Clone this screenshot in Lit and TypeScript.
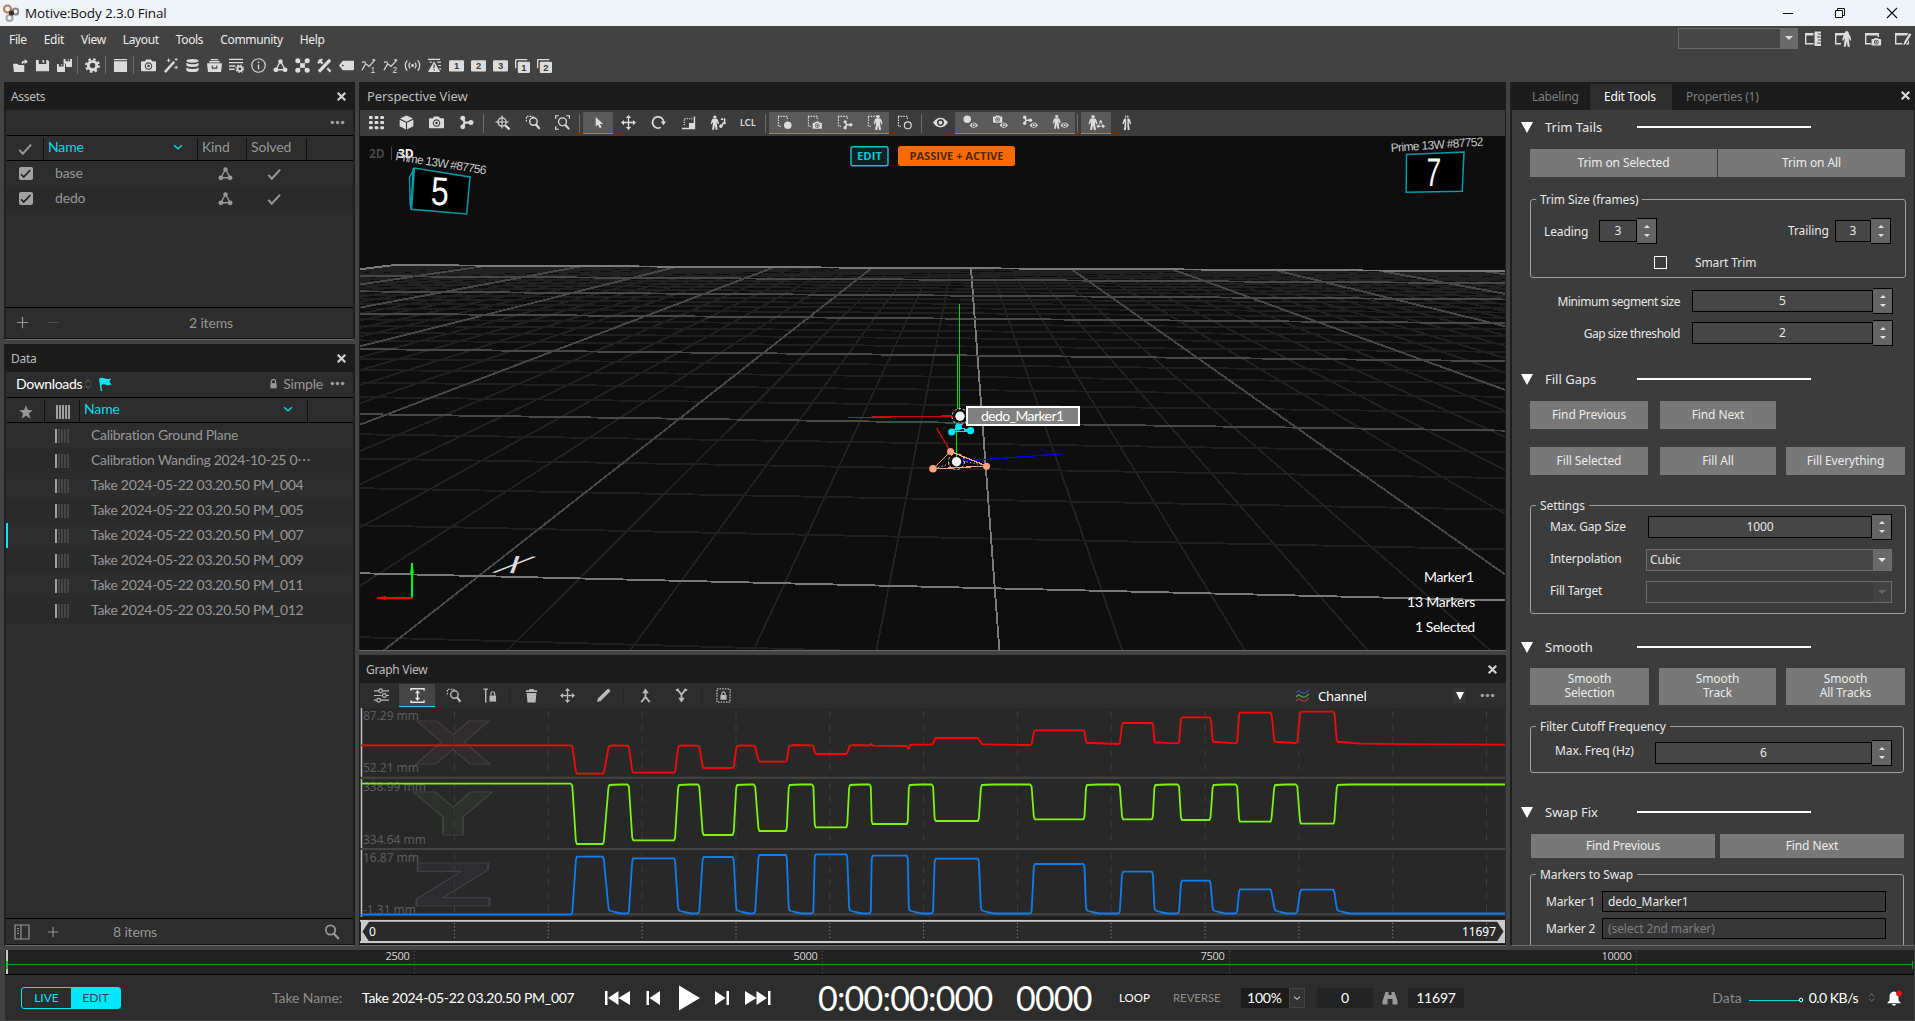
import { LitElement, html, svg, css, nothing } from "lit";
import { customElement } from "lit/decorators.js";

/* ---------- icon set: 16x16 artwork, painted with currentColor ---------- */
const person = (x: number, y: number, s: number) => svg`<g transform="translate(${x} ${y}) scale(${s * 1.08} ${s})"><circle cx="4" cy="1.7" r="1.7" fill="currentColor"/><path d="M2 3.700h4q.8 0 1.100 1L8.400 9.500l-1.200.4L6 7v2.400L6.900 16H4.900L4 10.800 3.100 16H1.100L2 9.400V7L.8 9.900l-1.200-.4L.9 4.700q.3-1 1.100-1z" fill="currentColor"/></g>`;
const triad = (x: number, y: number, s: number) => svg`<g transform="translate(${x} ${y}) scale(${s})"><path d="M8 3.5 3 12.5h10z" fill="none" stroke="currentColor" stroke-width="1.5"/><circle cx="8" cy="3.6" r="2.4" fill="currentColor"/><circle cx="3.1" cy="12.6" r="2.6" fill="currentColor"/><circle cx="12.9" cy="12.6" r="2.6" fill="currentColor"/></g>`;
const nodes = (x: number, y: number, s: number) => svg`<g transform="translate(${x} ${y}) scale(${s})"><path d="M4 3.5 6 8l-2 4.5M6 8h7" fill="none" stroke="currentColor" stroke-width="2.4"/><circle cx="4" cy="3.4" r="2.6" fill="currentColor"/><circle cx="4" cy="12.6" r="2.6" fill="currentColor"/><circle cx="12.7" cy="8" r="2.7" fill="currentColor"/></g>`;
const cam = (x: number, y: number, s: number) => svg`<g transform="translate(${x} ${y}) scale(${s})"><path fill-rule="evenodd" d="M5.3 1.5h5.4l1 2H15q1 0 1 1V13q0 1-1 1H1q-1 0-1-1V4.500q0-1 1-1h3.300zM8 4.600a4 4 0 1 0 .01 0z" fill="currentColor"/><circle cx="8" cy="8.600" r="2.100" fill="none" stroke="currentColor" stroke-width="1.500"/></g>`;
const eye = (x: number, y: number, s: number) => svg`<g transform="translate(${x} ${y}) scale(${s})"><path fill-rule="evenodd" d="M0 8Q3.500 2.800 8 2.800T16 8Q12.500 13.200 8 13.200T0 8zM8 4.200a3.800 3.800 0 1 0 .01 0z" fill="currentColor"/><circle cx="8" cy="8" r="2" fill="currentColor"/></g>`;
const dashBox = svg`<path d="M1 1.500h10v3M1.500 2v10h4" fill="none" stroke="currentColor" stroke-width="1.200" stroke-dasharray="1.600 1.200"/>`;
const windowBox = svg`<path d="M.7 2.700h12.600v10H.7z" fill="none" stroke="currentColor" stroke-width="1.400"/><path d="M0 2h14v2.500H0z" fill="currentColor"/>`;
const magnifier = svg`<circle cx="9" cy="7" r="4" fill="none" stroke="currentColor" stroke-width="1.500"/><path d="m11.800 10 3.700 4.800" stroke="currentColor" stroke-width="2.400"/>`;
const numTile = (n: string, stacked: boolean) => svg`${stacked ? svg`<path d="M.7 11V2.700q0-1 1-1H13" fill="none" stroke="currentColor" stroke-width="1.400"/>` : nothing}<rect x=${stacked ? 3 : 0} y=${stacked ? 4 : 2.500} width=${stacked ? 13 : 16} height="12" rx="1.200" fill="currentColor"/><text x=${stacked ? 9.500 : 8} y=${stacked ? 13.400 : 12.200} text-anchor="middle" font-size="10" font-weight="700" font-family="Liberation Sans, sans-serif" fill="#3a3a3a">${n}</text>`;
const plot = (n: string) => svg`<path d="M1 13 5 6l3.500 3L15 2M5 4.500 1 4.500M12 2h3" fill="none" stroke="currentColor" stroke-width="1.300"/><text x="10" y="15.500" font-size="9" font-family="Liberation Sans, sans-serif" fill="currentColor">${n}</text>`;

const ICONS: Record<string, unknown> = {
  open: svg`<path d="M0 6h5l1 1.500h6V15H1zM9 5.500Q9 3 12.500 3V1L16 4l-3.500 2.500V4.800q-2 0-2 1.700z" fill="currentColor"/>`,
  save: svg`<path fill-rule="evenodd" d="M1 2h12.500L15 3.500V14H1zM4 2v4.500h8V2H9.800v3H8V2z" fill="currentColor"/>`,
  saveAll: svg`<path fill-rule="evenodd" d="M7 1h9v8.500H9.500V6H7zM9 1v2.500h5V1h-1.500v1.500h-1V1zM0 6.500h8.500V15H0zM2 6.500V9h5V6.500H5.500V8h-1V6.500z" fill="currentColor"/>`,
  gear: svg`<circle cx="8" cy="8" r="4.500" fill="none" stroke="currentColor" stroke-width="3"/><circle cx="8" cy="8" r="6.800" fill="none" stroke="currentColor" stroke-width="2.200" stroke-dasharray="2.670 2.670"/>`,
  square: svg`<path d="M1 1h14v1.500H1zM1 3.500h14V15H1z" fill="currentColor"/>`,
  camera: cam(0, 0, 1),
  wand: svg`<path d="m2 15 10-11" stroke="currentColor" stroke-width="2.600"/><path d="M6 .5v4M4 2.500h4M14 8v4M12 10h4M12.500 1.500h3M14 0v3" stroke="currentColor"/>`,
  db: svg`<path d="M1.500 3q0-2 6.500-2t6.500 2-6.500 2-6.500-2zM1.500 5q2 1.700 6.500 1.700T14.500 5v2.500q0 2-6.500 2t-6.500-2zM1.500 10q2 1.700 6.500 1.700t6.500-1.700v2.700q0 2.300-6.500 2.300t-6.500-2.300z" fill="currentColor"/>`,
  drawer: svg`<path fill-rule="evenodd" d="M4 1h8v1.500H4zM2.500 3.200h11v1.500h-11zM0 5.500h16L15 15H1zM5 8v3.500h6V8H9.800v2H6.200V8z" fill="currentColor"/>`,
  listGear: svg`<path d="M0 1.500h15M0 5h15M0 8.500h7M0 12h6" stroke="currentColor" stroke-width="1.400"/><circle cx="11.500" cy="11.500" r="2.500" fill="none" stroke="currentColor" stroke-width="1.800"/><circle cx="11.500" cy="11.500" r="4" fill="none" stroke="currentColor" stroke-width="1.200" stroke-dasharray="1.570 1.570"/>`,
  info: svg`<circle cx="8" cy="8" r="7.200" fill="none" stroke="currentColor" stroke-width="1.200"/><path d="M8 7v5" stroke="currentColor" stroke-width="1.400"/><circle cx="8" cy="4.600" r=".9" fill="currentColor"/>`,
  triad: triad(0, 0, 1),
  five: svg`<path d="m3 3 10 10M13 3 3 13" stroke="currentColor" stroke-width="1"/>${[[3, 3], [13, 3], [8, 8], [3, 13], [13, 13]].map(([x, y]) => svg`<circle cx=${x} cy=${y} r="2.700" fill="currentColor"/>`)}`,
  tools: svg`<path d="M2 14.500 14 2" stroke="currentColor" stroke-width="3.400"/><path d="m2 2 4 4M11 11l3.500 3.500M1 5.500 5.500 1" stroke="currentColor" stroke-width="2.400"/>`,
  tag: svg`<path fill-rule="evenodd" d="M0 8 4 3h11q1 0 1 1v8q0 1-1 1H4zM4 7.200a.9.9 0 1 0 .01 0z" fill="currentColor"/>`,
  plot1: plot("1"),
  plot2: plot("2"),
  signal: svg`<circle cx="8" cy="8" r="1.500" fill="currentColor"/><path d="M5.500 5a4.500 4.500 0 0 0 0 6M10.500 5a4.500 4.500 0 0 1 0 6M2.500 2.500a8 8 0 0 0 0 11M13.500 2.500a8 8 0 0 1 0 11" fill="none" stroke="currentColor" stroke-width="1.300"/>`,
  warn: svg`<path d="M1 1.500h13M3 4.500h2M11 4.500h4M12 8h3M13 11.500h2" stroke="currentColor" stroke-width="1.300"/><path fill-rule="evenodd" d="M7.500 3.500 14 15H1zM6.900 7h1.300v4H6.900zM6.900 12h1.300v1.300H6.900z" fill="currentColor"/>`,
  t1: numTile("1", false), t2: numTile("2", false), t3: numTile("3", false),
  s1: numTile("1", true), s2: numTile("2", true),
  grid: svg`${[1, 6.500, 12].map((y) => [0, 6, 12].map((x) => svg`<rect x=${x} y=${y} width="4" height="3.200" rx="1" fill="currentColor"/>`))}`,
  cube: svg`<path d="m8 .5 7 3.300L8 7.300 1 3.800zM.7 5l6.700 3.300V15.500L.7 12zM15.300 5 8.600 8.300V15.500L15.300 12z" fill="currentColor"/>`,
  nodes: nodes(0, 0, 1),
  zoomTarget: svg`<circle cx="7.500" cy="7.500" r="4.400" fill="none" stroke="currentColor" stroke-width="1.300"/><path d="M7.500 .5v14M.5 7.500h14" stroke="currentColor" stroke-width="1.100"/><path d="m11 11 4.500 4.300" stroke="currentColor" stroke-width="2.400"/>`,
  zoomBox: svg`<path d="M1.500 7V1.500H9" fill="none" stroke="currentColor" stroke-width="1.300" stroke-dasharray="1.800 1.200"/>${magnifier}`,
  zoomFit: svg`<path d="M.7 4V.8H4M12 .8h3.300V4M.7 12v3.200H4" fill="none" stroke="currentColor" stroke-width="1.300"/><circle cx="8" cy="7.300" r="4.200" fill="none" stroke="currentColor" stroke-width="1.400"/><path d="m11 10.500 4 4.500" stroke="currentColor" stroke-width="2.200"/>`,
  pointer: svg`<path d="M5 2v10.500l2.500-2.300L9.300 14l2-.9-1.800-3.600H13z" fill="currentColor"/>`,
  move: svg`<path d="M8 2v12M2 8h12" stroke="currentColor" stroke-width="1.400"/><path d="m8 0 2.800 3.200H5.200zM8 16l2.800-3.200H5.200zM0 8l3.200-2.800v5.600zM16 8l-3.200-2.800v5.600z" fill="currentColor"/>`,
  rotate: svg`<path d="M10.500 13.200A6 6 0 1 1 13.600 7.500" fill="none" stroke="currentColor" stroke-width="1.800"/><path d="M10.500 7H16l-2.700 4z" fill="currentColor"/>`,
  scale: svg`<path d="M1 14.300h13.300V1.500" fill="none" stroke="currentColor" stroke-width="1.600"/><rect x="8.500" y="8.500" width="6" height="6" fill="currentColor"/><path d="M3.500 11V4H12" fill="none" stroke="currentColor" stroke-width="1.200" stroke-dasharray="1.400 1"/>`,
  skel: svg`${person(0, 0.500, 0.950)}<path d="M10 11q2.500.5 3-3M10.500 4.500h2.500M14.500 3.500v4" fill="none" stroke="currentColor" stroke-width="1.700"/><circle cx="10.500" cy="12" r="1.800" fill="currentColor"/><circle cx="14.500" cy="8.500" r="1.300" fill="currentColor"/>`,
  selMarker: svg`${dashBox}<circle cx="11.500" cy="11" r="4" fill="currentColor"/>`,
  selCam: svg`${dashBox}${cam(6, 6, 0.620)}`,
  selNodes: svg`${dashBox}${nodes(6, 5, 0.680)}`,
  selPerson: svg`${dashBox}${person(7.500, 0, 1)}`,
  selEmpty: svg`${dashBox}<circle cx="11.500" cy="11" r="3.700" fill="none" stroke="currentColor" stroke-width="1.200"/>`,
  eye: eye(0, 0, 1),
  eyeMarker: svg`<circle cx="4.500" cy="4.500" r="4" fill="currentColor"/>${eye(7, 6.500, 0.560)}`,
  eyeCam: svg`${cam(0, -0.500, 0.620)}${eye(7, 6.500, 0.560)}`,
  eyeNodes: svg`${nodes(-1, 0, 0.700)}${eye(7, 6.500, 0.560)}`,
  eyePerson: svg`${person(0, 0, 0.920)}${eye(8, 6.500, 0.560)}`,
  personTri: svg`${person(0, 0, 1)}${triad(8, 5, 0.560)}`,
  personHalf: svg`${person(4, 0, 1)}<path d="M8.300 0v16" stroke="#3c3c3c" stroke-width="1.200"/>`,
  sliders: svg`<path d="M0 3h5M9 3h7M0 8h8M13 8h3M0 13h3M7 13h9" stroke="currentColor" stroke-width="1.300"/><g fill="none" stroke="currentColor" stroke-width="1.300"><circle cx="7" cy="3" r="2"/><circle cx="11" cy="8" r="2"/><circle cx="5" cy="13" r="2"/></g>`,
  fitY: svg`<path d="M1 3V.800h14V3M1 13v2.200h14V13" fill="none" stroke="currentColor" stroke-width="1.400"/><path d="M8 4v8" stroke="currentColor" stroke-width="1.500"/><path d="m8 2.200 2.800 3.300H5.200zM8 13.800l2.800-3.300H5.200z" fill="currentColor"/>`,
  tLock: svg`<path d="M1.500 1.200h5M4 1v14.500" stroke="currentColor" stroke-width="1.500"/><path d="M8 8h7v6.500H8z" fill="currentColor"/><path d="M9.500 8V6q0-2 2-2t2 2v2" fill="none" stroke="currentColor" stroke-width="1.300"/>`,
  trash: svg`<path d="M2 2.500h3.500V1h5v1.500H14v1.700H2zM2.800 5.300h10.400L12.300 15.500H3.700z" fill="currentColor"/>`,
  pencil: svg`<path d="m1 15 1.200-4L12 1.200q1-.7 2 .2l.8.900q.7.900 0 1.700L5 13.800z" fill="currentColor"/>`,
  merge: svg`<path d="M8 4v5.500L3.500 15M8 9.500l4.500 5.500" fill="none" stroke="currentColor" stroke-width="1.900"/><path d="m8 .5 3.500 5h-7z" fill="currentColor"/>`,
  split: svg`<path d="M8 12V7L3.500 1.500M8 7l4.500-5.500M2 2.500 5 1M11 1l3 1.500" fill="none" stroke="currentColor" stroke-width="1.900"/><path d="m8 15.500 3.500-5h-7z" fill="currentColor"/>`,
  lockBox: svg`<path d="M1 1h14v14H1z" fill="none" stroke="currentColor" stroke-width="1.400" stroke-dasharray="1.600 1.200"/><path d="M4.700 7.500h6.600v5H4.700z" fill="currentColor"/><path d="M6.200 7.500V6q0-1.900 1.800-1.900T9.800 6v1.500" fill="none" stroke="currentColor" stroke-width="1.300"/>`,
  channel: svg`<g fill="none" stroke-width="1.400"><path d="M0 4.500 3.500 2 8 5 12 4.500 16 1" stroke="#4050c0"/><path d="M0 9.500 3.500 7 8 10 12 9.500 16 6" stroke="#59b146"/><path d="M0 14.500 3.500 12 8 15 12 14.500 16 11" stroke="#b03a3a"/></g>`,
  check: svg`<path d="m1.500 9 4 4.300L15 3" fill="none" stroke="currentColor" stroke-width="2.400"/>`,
  star: svg`<path d="m8 .2 2.200 5.400 5.600.3-4.400 3.600 1.600 5.900L8 12.200 3 15.400l1.600-5.900L.2 5.900l5.600-.3z" fill="currentColor"/>`,
  flag: svg`<path d="M2 2.500 4 16" stroke="currentColor" stroke-width="1.700"/><path d="M1.500 1.800q3-2 6-.300t7.500-.200L13 5.500l2.500 3q-4 1.700-6.500.3t-6 .9z" fill="currentColor"/>`,
  lock: svg`<path d="M3.500 7.500h9V15h-9z" fill="currentColor"/><path d="M5 7.500V5q0-3 3-3t3 3v2.500" fill="none" stroke="currentColor" stroke-width="1.600"/>`,
  search: svg`<circle cx="6.500" cy="6" r="4.700" fill="none" stroke="currentColor" stroke-width="1.800"/><path d="m9.800 9.500 5 5.500" stroke="currentColor" stroke-width="2.500"/>`,
  sidebar: svg`<path d="M1 1h14v14H1zM7 1v14" fill="none" stroke="currentColor" stroke-width="1.200"/><path d="M3 4.500h2M3 7h2M3 9.500h2" stroke="currentColor"/>`,
  plus: svg`<path d="M8 2v12M2 8h12" stroke="currentColor" stroke-width="1.200"/>`,
  minus: svg`<path d="M2 8h12" stroke="currentColor" stroke-width="1.200"/>`,
  close: svg`<path d="m4 4 8 8M12 4l-8 8" stroke="currentColor" stroke-width="2.300"/>`,
  dots: svg`<circle cx="2.500" cy="8" r="1.900" fill="currentColor"/><circle cx="8" cy="8" r="1.900" fill="currentColor"/><circle cx="13.500" cy="8" r="1.900" fill="currentColor"/>`,
  chev: svg`<path d="m4 6.200 4 3.600 4-3.600" fill="none" stroke="currentColor" stroke-width="1.300"/>`,
  updown: svg`<path d="m4.500 6.300 3.500-4 3.500 4M4.500 9.700l3.500 4 3.500-4" fill="none" stroke="currentColor" stroke-width="1.300"/>`,
  winRuler: svg`${windowBox}<path d="M8.500 0H16v16H8.500z" fill="#424242"/><path d="M9.500.5H16v2h-3v1h3v2h-4v1h4v2h-3v1h3v2h-4v1h4V15H9.500z" fill="currentColor"/>`,
  winPerson: svg`${windowBox}<path d="M6 4.500h10V16H6z" fill="#424242"/>${person(7.500, 0, 0.980)}`,
  winCam: svg`${windowBox}<path d="M6 6h10v9H6z" fill="#424242"/>${cam(6.500, 6, 0.600)}`,
  winPen: svg`${windowBox}<path d="m7 15 .8-4L14 1l2 1v4l-6 9z" fill="#424242"/><path d="m8.500 14.500.600-3.300L14.300 2.300l2 1.300-5.500 9z" fill="currentColor"/>`,
  binoc: svg`<path d="M3.500 2h3v3h3V2h3l3 9v3.500h-5V9h-5v5.500h-5V11z" fill="currentColor"/>`,
  bell: svg`<path d="M8 1.500q4.500.5 4.500 5.500v3.500l2.500 2.700H1l2.500-2.700V7q0-5 4.500-5.500zM6 14h4q-.5 1.700-2 1.700T6 14z" fill="#fff"/><circle cx="13" cy="3.500" r="2.900" fill="#f01010"/>`,
  min: svg`<path d="M3 8.500h10" stroke="currentColor" stroke-width="1"/>`,
  restore: svg`<path d="M3.500 5.500h7v7h-7zM5.500 5.500v-2h7v7h-2" fill="none" stroke="currentColor"/>`,
  winClose: svg`<path d="m3 3 10 10M13 3 3 13" stroke="currentColor" stroke-width="1.100"/>`,
};
const ic = (name: string, size = 16) => html`<svg class="ic" width=${size} height=${size} viewBox="0 0 16 16">${ICONS[name]}</svg>`;

/* ---------- shared styles ---------- */
const base = css`
  * { box-sizing: border-box; }
  :host { display: block; }
  .ic { display: block; flex: none; overflow: visible; }
  .head { height: 28px; background: #1c1c1c; color: #bdbdbd; display: flex; align-items: center; justify-content: space-between; padding: 0 6px 0 7px; font: 12px "Noto Sans", sans-serif; letter-spacing: -.3px; }
  .head .ic { color: #d2d2d2; }
`;

/* ---------- 3D viewport ---------- */
const project = (u: number, v: number): [number, number] => {
  const w = -0.0057 * u - 0.13543 * v + 1;
  return [(94 * u - 130.76 * v + 971) / w, (-0.98 * u - 26.34 * v + 268.3) / w];
};
const gridLine = (u0: number, v0: number, u1: number, v1: number, color: string) => {
  const [a, b] = project(u0, v0);
  const [c, d] = project(u1, v1);
  return svg`<line x1=${a.toFixed(1)} y1=${b.toFixed(1)} x2=${c.toFixed(1)} y2=${d.toFixed(1)} stroke=${color}/>`;
};
const floorGrid = () => {
  const minor: unknown[] = [];
  const major: unknown[] = [];
  for (let i = -30; i <= 30; i++) {
    const u = i / 5;
    if (i % 5) minor.push(gridLine(u, 0, u, 7, "#222"));
    else major.push(gridLine(u, 0, u, 7, i === 0 || i === -30 ? "#7a7a7a" : "#484848"));
  }
  for (let j = 0; j <= 34; j++) {
    const v = j / 5;
    if (j % 5) minor.push(gridLine(-6, v, 6, v, "#202020"));
    else major.push(gridLine(-6, v, 6, v, j === 0 || j === 30 ? "#7a7a7a" : "#484848"));
  }
  return svg`<g stroke-width="1.9" shape-rendering="crispEdges">${minor}${major}</g>`;
};

@customElement("perspective-view")
class PerspectiveView extends LitElement {
  static styles = [base, css`
    :host { height: 569px; border-bottom: 1px solid #6a6a6a; background: #1c1c1c; }
    .head { font-size: 13px; padding-left: 8px; letter-spacing: -.1px; }
    .bar { height: 26px; margin: 0 1px; background: #3c3c3c; display: flex; align-items: center; color: #dcdcdc; padding-left: 1px; }
    .cell { width: 30px; height: 22px; display: flex; align-items: center; justify-content: center; border-bottom: 1px solid transparent; }
    .on { background: #5a5a5a; border-bottom-color: #2f9df0; }
    .sep { width: 1px; height: 19px; background: #6c6c6c; margin: 0 3px 0 2px; }
    .lcl { font: 700 9px Lato, sans-serif; letter-spacing: .3px; }
    .scene { display: block; margin: 0 1px; background: #0e0e0e; }
  `];
  bar() {
    const on = new Set(["pointer", "selMarker", "selCam", "selNodes", "selPerson", "eyeMarker", "eyeCam", "eyeNodes", "eyePerson", "personTri"]);
    const order = ["grid", "cube", "camera", "nodes", "|", "zoomTarget", "zoomBox", "zoomFit", "|", "pointer", "move", "rotate", "scale", "skel", "LCL", "|",
      "selMarker", "selCam", "selNodes", "selPerson", "selEmpty", "|", "eye", "eyeMarker", "eyeCam", "eyeNodes", "eyePerson", "|", "personTri", "personHalf"];
    return order.map((n) => n === "|" ? html`<div class="sep"></div>`
      : html`<div class="cell ${on.has(n) ? "on" : ""}">${n === "LCL" ? html`<span class="lcl">LCL</span>` : ic(n, 15)}</div>`);
  }
  render() {
    return html`
      <div class="head"><span>Perspective View</span></div>
      <div class="bar">${this.bar()}</div>
      <svg class="scene" width="1145" height="514" viewBox="360 136 1145 514">
        ${floorGrid()}
        <g font-family="Open Sans, sans-serif" font-weight="700" font-size="12">
          <text x="369" y="158" fill="#474747">2D</text><path d="M391.500 147v13" stroke="#474747"/>
          <text x="398" y="158" fill="#fff">3D</text>
        </g>
        <g font-family="Liberation Sans, sans-serif" fill="#c8c8c8" font-size="12">
          <text transform="translate(395 160) rotate(9)" textLength="92">Prime 13W #87756</text>
          <text transform="translate(1391 152) rotate(-4)" textLength="93">Prime 13W #87752</text>
        </g>
        <g fill="#000" stroke="#0a9bab" stroke-width="1.500">
          <path d="m414.500 168-5 9.500.7 27 1.300 5 3-41.500 55.500 9-3.300 37-55.700-4.700 2.200-41.300"/>
          <path d="M1406.500 154.500 1464 152l-1.800 39.300-56 1z"/>
        </g>
        <g font-family="Liberation Sans, sans-serif" fill="#fff" font-size="40" text-anchor="middle">
          <text transform="translate(439.500 205) scale(.8 1) rotate(3)">5</text>
          <text transform="translate(1432.500 185.500) scale(.65 1) skewX(-5)">7</text>
          <text text-anchor="start" font-size="100" fill="#dcdcdc" transform="matrix(.35 .01 -.34 .239 491 572.500)">X</text>
        </g>
        <rect x="851" y="146.700" width="37" height="19" rx="2" fill="#0e2023" stroke="#0cc6d6" stroke-width="1.400"/>
        <rect x="898" y="146" width="117" height="20" rx="2.500" fill="#ff6a00"/>
        <g font-family="Open Sans, sans-serif" font-weight="700" font-size="11" lengthAdjust="spacingAndGlyphs">
          <text x="857" y="160.300" fill="#0cc6d6" textLength="25" lengthAdjust="spacingAndGlyphs">EDIT</text>
          <text x="909.500" y="160.300" fill="#4a2a10" textLength="94" lengthAdjust="spacingAndGlyphs">PASSIVE + ACTIVE</text>
        </g>
        <g fill="none" stroke-width="1.300" shape-rendering="crispEdges">
          <path d="M412 563v36" stroke="#00ff00" stroke-width="2"/><path d="M412.500 598H377" stroke="#f00" stroke-width="2"/>
          <path d="M848 417.500 952 416M936.500 428l16 27" stroke="#d80000"/>
          <path d="M959.500 303.500v106M957.500 355v54M956.500 428v30" stroke="#00e000"/>
          <path d="m965 461 95-7M960.500 388v3" stroke="#0000e6"/>
          <path d="m933 469 17.500-17.500L986.500 466l-53.500 3" stroke="#ff9f80"/>
          <path d="m951.700 432 18.300-1.300-12-4z" stroke="#00e5f5"/>
        </g>
        <path d="m412 562 2 11h-4z" fill="#0f0"/><path d="m375 598 11-2v4z" fill="#f00"/><path d="M413.500 588.500l1.500 3-1.500 4z" fill="#00f"/>
        <g fill="none" stroke="#e0e0e0" stroke-dasharray="2.500 2"><circle cx="960" cy="416.500" r="8"/><circle cx="956.500" cy="461.500" r="8"/><path d="m938 467.500 13-4M963 461l22 4.500" stroke="#aaa" stroke-dasharray="1.500 2"/></g>
        <g fill="#ffa183"><circle cx="950.500" cy="451.500" r="3.500"/><circle cx="933" cy="468.700" r="3.800"/><circle cx="986.500" cy="466.300" r="3.500"/></g>
        <g fill="#00e8fa"><circle cx="951.700" cy="432" r="3.600"/><circle cx="970.500" cy="430.700" r="3.600"/><circle cx="958.500" cy="427" r="3.400"/></g>
        <g fill="#f2f2f2"><circle cx="960" cy="416.300" r="4.700"/><circle cx="956.500" cy="461.700" r="4.700"/></g>
        <rect x="967" y="407" width="112" height="18" fill="#808080" stroke="#fff" stroke-width="2"/>
        <g font-family="Lato, sans-serif" font-size="14" fill="#fff">
          <text x="981" y="421" textLength="83">dedo_Marker1</text>
          <g letter-spacing="-.2"><text x="1424" y="582" textLength="50">Marker1</text><text x="1407" y="607" textLength="68">13 Markers</text><text x="1415" y="632" textLength="60">1 Selected</text></g>
        </g>
      </svg>`;
  }
}

/* ---------- graph ---------- */
const EDGES: number[][] = [
  [570.8, 576.9, 602.9, 609.4], [627.4, 633.2, 674.1, 679.1], [697.8, 703.6, 732.7, 737.2], [753.7, 759.4, 785.8, 789.7],
  [811.9, 815.7, 846.3, 850.1], [869.3, 872.7, 906.8, 909.8], [931.6, 935.6, 977.9, 981.9], [1030.1, 1034.8, 1083.5, 1087],
  [1118.3, 1123, 1151.9, 1155.4], [1177.6, 1181.9, 1209.6, 1213.6], [1235.7, 1240, 1270.5, 1275.2], [1295.8, 1301, 1333.4, 1337.7],
];
const GREEN = [844, 840.3, 835, 831, 827.3, 824, 821, 819.3, 819.3, 820, 821.7, 823.7];
const BLUE = [856.7, 858.3, 857, 855, 854.3, 855.7, 858.7, 864, 871.7, 880.7, 889.3, 889.7];
const RED = [773.7, 772.7, 768, 761.7, 754, 745.7, 738, 730.3, 723, 717.3, 712.7, 711.7];
const trace = (start: number, levels: number[], after: number, rest: number) => {
  let d = `M361 ${start}`;
  EDGES.forEach(([a, b, c, e], i) => {
    const l = levels[i];
    const from = i ? rest : start;
    const s = Math.sign(l - from);
    d += `L${a} ${from}L${a + 1.5} ${from + s * 2}L${b - 1} ${l - s * 3}L${b} ${l}L${c} ${l}L${c + 1} ${l - s * 3}L${e - 1} ${after + s * 3}L${e} ${after}L${e + 5} ${(after + rest) / 2}L${e + 12} ${rest}`;
  });
  return d + `L1505 ${rest}`;
};
const redTrace = () => {
  const afters = [746, 746, 746, 745.7, 745.7, 744.7, 744.3, 743, 742.7, 742, 742, 742];
  const rests = [745.3, 745.7, 745.7, 745.7, 745.3, 745.3, 744.5, 745, 744, 743.3, 743.3, 743];
  let d = "M361 745.3";
  EDGES.forEach(([a, b, c, e], i) => {
    if (i === 5) { d += `L${a} 745.5L871 744L873 745.700L906.5 746L908.5 749L910.5 744.700`; return; }
    const l = RED[i];
    const s = Math.sign(l - 745);
    d += `L${a} ${rests[i]}L${a + 1.5} ${rests[i] + s}L${b - 1} ${l - s * 2}L${b} ${l}L${c} ${l}L${c + 1.2} ${l - s * 2}L${e - 1} ${afters[i] + s * 2}L${e} ${afters[i]}L${e + 4} ${afters[i] - (i < 6 ? 0.7 : 0)}`;
  });
  return d + "L1360 743.700L1400 744.200L1505 744.700";
};

@customElement("graph-view")
class GraphView extends LitElement {
  static styles = [base, css`
    :host { height: 291px; background: #2d2d2d; border-left: 1px solid #1c1c1c; border-bottom: 1px solid #6a6a6a; }
    .head { margin-left: -1px; }
    .bar { height: 25px; display: flex; align-items: center; color: #b9b9b9; padding-left: 3px; }
    .cell { width: 36px; height: 23px; display: flex; align-items: center; justify-content: center; border-bottom: 1px solid transparent; }
    .on { background: #444; border-bottom-color: #19d8ea; color: #e6e6e6; }
    .sep { width: 1px; height: 16px; background: #262626; margin: 0 3px 0 2px; }
    .chan { margin-left: auto; width: 170px; display: flex; align-items: center; color: #fff; font: 13px "Noto Sans", sans-serif; letter-spacing: -.25px; }
    .chan span { margin-left: 9px; }
    .arrow { margin-left: auto; width: 13px; height: 15px; display: flex; align-items: center; justify-content: center; background: #363636; }
    .arrow::after { content: ""; border: 4px solid transparent; border-top: 8px solid #fff; border-bottom: 0; }
    .more { margin: 0 11px 0 14px; color: #9b9b9b; }
    .plot { display: block; background: #282828; }
  `];
  cell(n: string, on = false) { return html`<div class="cell ${on ? "on" : ""}">${ic(n, 15)}</div>`; }
  render() {
    const xs = Array.from({ length: 12 }, (_, i) => 454.5 + i * 93.82);
    return html`
      <div class="head"><span>Graph View</span>${ic("close", 15)}</div>
      <div class="bar">
        ${this.cell("sliders")}${this.cell("fitY", true)}${this.cell("zoomBox")}${this.cell("tLock")}<div class="sep"></div>
        ${this.cell("trash")}${this.cell("move")}${this.cell("pencil")}<div class="sep"></div>
        ${this.cell("merge")}${this.cell("split")}<div class="sep"></div>${this.cell("lockBox")}
        <div class="chan">${ic("channel", 13)}<span>Channel</span><div class="arrow"></div></div>
        <div class="more">${ic("dots", 15)}</div>
      </div>
      <svg class="plot" width="1145" height="237" viewBox="360 708 1145 237">
        <g font-family="DejaVu Sans, sans-serif" font-weight="700" font-size="58" stroke-width="1" stroke="#404040">
          <text transform="translate(453 763.500) scale(1.740 1)" text-anchor="middle" fill="#312c2d">X</text>
          <text transform="translate(453 834.500) scale(1.820 1)" text-anchor="middle" fill="#2d312c">Y</text>
          <text transform="translate(453 905.500) scale(1.980 1)" text-anchor="middle" fill="#2d2d31">Z</text>
        </g>
        ${xs.map((x) => svg`<path d="M${x.toFixed(1)} 711v64M${x.toFixed(1)} 782v64M${x.toFixed(1)} 853v60" stroke="#3c3c3c" stroke-dasharray="7 6"/>`)}
        <path d="M361 777.800h1144M361 849h1144M361 914.200h1144" stroke="#444" stroke-width="2"/>
        <path d="M361.500 708v69M361.500 779v69M361.500 850v67" stroke="#bdbdbd" stroke-width="1.500"/>
        <g font-family="Noto Sans, sans-serif" font-size="12" fill="#5c5c5c">
          <text x="363" y="720" textLength="56">87.29 mm</text><text x="363" y="772" textLength="56">52.21 mm</text>
          <text x="363" y="791" textLength="63">338.99 mm</text><text x="363" y="844" textLength="63">334.64 mm</text>
          <text x="363" y="862" textLength="56">16.87 mm</text><text x="363" y="914" textLength="53">-1.31 mm</text>
        </g>
        <g fill="none" stroke-width="1.800" stroke-linejoin="round">
          <path d=${redTrace()} stroke="#f20a0a"/>
          <path d=${trace(783.7, GREEN, 785, 784.5)} stroke="#7cf212"/>
          <path d=${trace(914.7, BLUE, 910.5, 913.5)} stroke="#0f7dee"/>
        </g>
        <path d="M360 917.500h1145v27.500H360z" fill="#2a2a2a"/>
        <path d="M360 920.800h1145M360 942h1145" stroke="#c9c9c9" stroke-width="1.800"/>
        <path d="M360 918h1145M360 944.500h1145" stroke="#111"/>
        ${xs.map((x) => svg`<path d="M${x.toFixed(1)} 923v17" stroke="#9a9a9a" stroke-dasharray="1 2.500"/>`)}
        <path d="M361 920h9l-7.500 11.500L370 943h-9zM1505 920h-9l7.500 11.500L1496 943h9z" fill="#c9c9c9"/>
        <g font-family="Noto Sans, sans-serif" font-size="12" fill="#fff"><text x="369" y="936">0</text><text x="1462" y="936" textLength="34">11697</text></g>
      </svg>`;
  }
}

/* ---------- left column ---------- */
@customElement("assets-panel")
class AssetsPanel extends LitElement {
  static styles = [base, css`
    :host { height: 258px; background: #2d2d2d; border: 2px solid #1f1f1f; border-top: 0; border-bottom: 1px solid #6a6a6a; box-shadow: inset 0 -1px #111; font: 14px Lato, sans-serif; color: #979797; letter-spacing: -.15px; }
    .head { margin: 0 -2px; }
    .tools { height: 25px; display: flex; align-items: center; justify-content: flex-end; padding-right: 8px; color: #9b9b9b; }
    .table { padding-left: 1px; }
    .cols, .row { display: grid; grid-template-columns: 37px 154px 49px 60px 1fr; }
    .cols { height: 26px; border-top: 1px solid #000; border-bottom: 1px solid #000; }
    .cols > div { border-right: 1px solid #111; margin: 2px 0; display: flex; align-items: center; padding: 0 0 5px 4px; }
    .cols > div:last-child { border: 0; }
    .cols .c { justify-content: center; padding: 0; }
    .cyan { color: #14d8ea; }
    .cols .cyan { justify-content: space-between; padding-right: 11px; }
    .row { height: 25px; align-items: center; }
    .row:nth-child(odd) { background: #2a2a2a; }
    .row .c { display: flex; justify-content: center; }
    .row .c:nth-child(3) { padding-left: 5px; }
    .row .c:nth-child(4) { padding-right: 7px; }
    .box { width: 14px; height: 13px; border-radius: 2px; background: #a2a2a2; color: #1e1e1e; display: grid; place-items: center; margin-right: 0; }
    .label { padding: 0 0 2px 11px; }
    .space { height: 96px; }
    .foot { height: 31px; border-top: 1px solid #000; display: flex; align-items: center; padding: 0 0 1px 9px; }
    .foot .ic + .ic { margin-left: 16px; color: #4d4d4d; }
    .foot span { margin-left: 128px; }
  `];
  render() {
    return html`
      <div class="head"><span>Assets</span>${ic("close", 15)}</div>
      <div class="tools">${ic("dots", 15)}</div>
      <div class="table">
        <div class="cols"><div class="c">${ic("check", 14)}</div><div class="cyan"><span>Name</span>${ic("chev", 16)}</div><div>Kind</div><div>Solved</div><div></div></div>
        ${["base", "dedo"].map((n) => html`<div class="row"><div class="c"><div class="box">${ic("check", 11)}</div></div><div class="label">${n}</div><div class="c">${ic("triad", 15)}</div><div class="c">${ic("check", 14)}</div></div>`)}
      </div>
      <div class="space"></div>
      <div class="foot">${ic("plus", 15)}${ic("minus", 15)}<span>2 items</span></div>`;
  }
}

@customElement("data-panel")
class DataPanel extends LitElement {
  static styles = [base, css`
    :host { height: 602px; background: #2d2d2d; border: 2px solid #1f1f1f; border-top: 0; border-bottom: 1px solid #6a6a6a; box-shadow: inset 0 -1px #111; font: 14px Lato, sans-serif; color: #979797; display: flex; flex-direction: column; letter-spacing: -.15px; }
    .head { margin: 0 -2px; flex: none; }
    .tools { height: 25px; display: flex; align-items: center; padding: 0 8px 2px 10px; }
    .tools .dl { color: #fff; letter-spacing: -.35px; }
    .tools .ud { color: #6b6b6b; }
    .tools .fl { color: #14e0f2; margin-left: 4px; }
    .tools .lk { margin-left: auto; margin-right: 4px; }
    .tools .smp { letter-spacing: -.2px; }
    .tools .dt { margin-left: 7px; color: #9b9b9b; }
    .table { padding-left: 1px; }
    .cols, .row { display: grid; grid-template-columns: 38px 35px 228px 1fr; }
    .cols { height: 26px; border-top: 1px solid #000; border-bottom: 1px solid #000; flex: none; }
    .cols > div { border-right: 1px solid #111; margin: 2px 0; display: flex; align-items: center; padding: 0 0 5px 4px; }
    .cols > div:last-child { border: 0; }
    .cols .c { justify-content: center; padding: 1px 0 0 1px; }
    .cols .cyan { color: #14d8ea; justify-content: space-between; padding-right: 11px; }
    .row { height: 25px; align-items: center; margin: 0 2px 0 -1px; border-left: 1px solid transparent; }
    .row:nth-child(odd) { background: #2a2a2a; }
    .row.cur { border-left-color: #14e0f2; box-shadow: inset 1px 0 #14e0f2; }
    .bars { display: flex; gap: 1px; height: 14px; padding-left: 10px; }
    .bars i { width: 2px; background: #454545; }
    .bars i:first-child, .cols .bars i { background: #a0a0a0; }
    .cols .bars { padding: 0; }
    .name { padding: 0 0 2px 11px; white-space: nowrap; letter-spacing: -.29px; }
    .foot { margin-top: auto; height: 27px; border-top: 1px solid #000; display: flex; align-items: center; padding: 0 13px 1px 8px; }
    .foot .pl { margin-left: 16px; }
    .foot span { margin-left: 53px; margin-right: auto; }
  `];
  render() {
    const rows = ["Calibration Ground Plane", "Calibration Wanding 2024-10-25 0⋯", ...["004", "005", "007", "009", "011", "012"].map((n) => `Take 2024-05-22 03.20.50 PM_${n}`)];
    const bars = html`<div class="bars">${[0, 1, 2, 3, 4].map(() => html`<i></i>`)}</div>`;
    return html`
      <div class="head"><span>Data</span>${ic("close", 15)}</div>
      <div class="tools"><span class="dl">Downloads</span><div class="ud">${ic("updown", 12)}</div><div class="fl">${ic("flag", 14)}</div><div class="lk">${ic("lock", 11)}</div><span class="smp">Simple</span><div class="dt">${ic("dots", 15)}</div></div>
      <div class="table">
        <div class="cols"><div class="c">${ic("star", 14)}</div><div class="c">${bars}</div><div class="cyan"><span>Name</span>${ic("chev", 16)}</div><div></div></div>
        ${rows.map((r, i) => html`<div class="row ${i === 4 ? "cur" : ""}"><div></div>${bars}<div class="name">${r}</div></div>`)}
      </div>
      <div class="foot">${ic("sidebar", 16)}<div class="pl">${ic("plus", 14)}</div><span>8 items</span>${ic("search", 16)}</div>`;
  }
}

/* ---------- edit tools ---------- */
@customElement("edit-tools")
class EditTools extends LitElement {
  static styles = [base, css`
    :host { height: 864px; background: #3c3c3c; border: 2px solid #1f1f1f; border-right-width: 1px; border-top: 0; border-bottom: 1px solid #6a6a6a; font: 12px "Noto Sans", sans-serif; color: #e8e8e8; overflow: hidden; letter-spacing: -.1px; }
    .tabs { height: 28px; margin-left: -2px; background: #1c1c1c; display: flex; align-items: flex-end; letter-spacing: -.2px; }
    .tab { height: 26px; line-height: 25px; color: #7f7f7f; padding: 0 14px; }
    .tab.first { width: 80px; padding-left: 22px; padding-right: 0; }
    .tab.on { width: 82px; padding-right: 0; background: #2d2d2d; color: #fff; }
    .tabs .ic { margin: 0 1px 7px auto; color: #d8d8d8; }
    .sect { display: flex; align-items: center; height: 20px; padding-left: 9px; font-size: 13px; letter-spacing: 0; }
    .sect::before { content: ""; border: 6px solid transparent; border-top: 11px solid #fff; border-bottom: 0; }
    .sect span { width: 92px; margin-left: 12px; }
    .sect i { width: 174px; height: 2px; background: #fff; }
    .btns { display: flex; margin-left: 18px; }
    .b { background: #787878; color: #ececec; height: 28px; display: flex; align-items: center; justify-content: center; text-align: center; line-height: 14px; }
    .b.tall { height: 37px; padding-bottom: 1px; }
    .w116 { width: 116px; margin: 0 10px 0 12px; } .w117 { width: 117px; margin: 0 10px; } .w118 { width: 118px; } .w119 { width: 119px; } .w187 { width: 187px; } .w184 { width: 184px; height: 24px; }
    .g1 { gap: 1px; } .g5 { gap: 5px; padding-left: 1px; }
    .group { margin: 0 0 0 18px; width: 376px; border: 1px solid #a0a0a0; border-radius: 3px; }
    .group.n { width: 374px; }
    .legend { width: max-content; margin: -9px 0 0 5px; padding: 0 4px; height: 18px; line-height: 18px; background: #3c3c3c; }
    .line { display: flex; align-items: center; height: 26px; white-space: nowrap; }
    .spin { display: flex; align-items: center; height: 26px; }
    .val { height: 22px; flex: 1; border: 1px solid #000; background: #464646; text-align: center; line-height: 20px; }
    .ud { width: 20px; height: 26px; background: #646464; border: 1px solid #000; border-left: 0; display: flex; flex-direction: column; align-items: center; justify-content: center; gap: 6px; }
    .ud::before { content: ""; border: 3px solid transparent; border-bottom: 3px solid #e0e0e0; border-top: 0; }
    .ud::after { content: ""; border: 3px solid transparent; border-top: 3px solid #e0e0e0; border-bottom: 0; }
    .combo { width: 246px; height: 22px; border: 1px solid #6e6e6e; background: #464646; display: flex; line-height: 20px; padding-left: 3px; }
    .combo b { margin-left: auto; width: 18px; background: #6a6a6a; display: grid; place-items: center; }
    .combo b::after { content: ""; border: 4px solid transparent; border-top: 4px solid #e6e6e6; border-bottom: 0; }
    .combo.off { background: #3c3c3c; } .combo.off b { background: #424242; } .combo.off b::after { border-top-color: #666; }
    .chk { width: 13px; height: 13px; border: 1px solid #fff; }
    .field { width: 284px; height: 21px; border: 1px solid #000; background: #373737; padding-left: 5px; line-height: 19px; font-size: 12px; }
    .field.ph { color: #7d7d7d; }
    .lead { padding-left: 13px; width: 68px; } .s58 { width: 58px; } .s56 { width: 56px; } .trail { margin-left: 131px; width: 47px; padding-bottom: 2px; }
    .smart { padding-left: 123px; } .smart span { margin-left: 28px; padding-top: 1px; }
    .right { width: 168px; text-align: right; margin-right: 12px; letter-spacing: -.45px; } .s201 { width: 201px; }
    .l97, .l95 { padding: 0 0 3px 19px; letter-spacing: -.2px; } .l97 { width: 117px; padding-bottom: 1px; } .l95 { width: 115px; } .s244 { width: 244px; } .s237 { width: 237px; }
    .l124 { padding: 0 0 5px 24px; width: 124px; } .l71 { padding-left: 15px; width: 71px; letter-spacing: -.2px; padding-top: 1px; }
    .up { margin-top: -1px; }
  `];
  sect(t: string) { return html`<div class="sect"><span>${t}</span><i></i></div>`; }
  spin(v: string, cls: string) { return html`<div class="spin ${cls}"><div class="val">${v}</div><div class="ud"></div></div>`; }
  btns(cls: string, ...b: [string, string][]) { return html`<div class="btns ${cls}">${b.map(([w, t]) => html`<div class="b ${w}"><div>${t.split("\n").map((p, i) => html`${i ? html`<br>` : nothing}${p}`)}</div></div>`)}</div>`; }
  gap(px: number) { return html`<div style="height:${px}px"></div>`; }
  render() {
    return html`
      <div class="tabs"><div class="tab first">Labeling</div><div class="tab on">Edit Tools</div><div class="tab">Properties (1)</div>${ic("close", 15)}</div>
      ${this.gap(7)}${this.sect("Trim Tails")}${this.gap(12)}
      ${this.btns("g1", ["w187", "Trim on Selected"], ["w187", "Trim on All"])}
      ${this.gap(22)}
      <div class="group"><div class="legend">Trim Size (frames)</div>
        ${this.gap(9)}
        <div class="line"><span class="lead">Leading</span>${this.spin("3", "s58")}<span class="trail">Trailing</span>${this.spin("3", "s56")}</div>
        ${this.gap(5)}
        <div class="line smart"><div class="chk"></div><span>Smart Trim</span></div>
        ${this.gap(2)}
      </div>
      ${this.gap(10)}
      <div class="line"><span class="right">Minimum segment size</span>${this.spin("5", "s201")}</div>
      ${this.gap(6)}
      <div class="line"><span class="right">Gap size threshold</span>${this.spin("2", "s201")}</div>
      ${this.gap(23)}${this.sect("Fill Gaps")}${this.gap(12)}
      ${this.btns("", ["w118", "Find Previous"], ["w116", "Find Next"])}
      ${this.gap(18)}
      ${this.btns("", ["w118", "Fill Selected"], ["w116", "Fill All"], ["w119", "Fill Everything"])}
      ${this.gap(30)}
      <div class="group"><div class="legend">Settings</div>
        <div class="line up"><span class="l97">Max. Gap Size</span>${this.spin("1000", "s244")}</div>
        ${this.gap(7)}
        <div class="line"><span class="l95">Interpolation</span><div class="combo"><span>Cubic</span><b></b></div></div>
        ${this.gap(6)}
        <div class="line"><span class="l95">Fill Target</span><div class="combo off"><b></b></div></div>
        ${this.gap(8)}
      </div>
      ${this.gap(23)}${this.sect("Smooth")}${this.gap(11)}
      ${this.btns("", ["w119 tall", "Smooth\nSelection"], ["w117 tall", "Smooth\nTrack"], ["w119 tall", "Smooth\nAll Tracks"])}
      ${this.gap(21)}
      <div class="group n"><div class="legend">Filter Cutoff Frequency</div>
        ${this.gap(4)}
        <div class="line"><span class="l124">Max. Freq (Hz)</span>${this.spin("6", "s237")}</div>
        ${this.gap(6)}
      </div>
      ${this.gap(29)}${this.sect("Swap Fix")}${this.gap(12)}
      ${this.btns("g5", ["w184", "Find Previous"], ["w184", "Find Next"])}
      ${this.gap(16)}
      <div class="group n"><div class="legend">Markers to Swap</div>
        ${this.gap(4)}
        <div class="line"><span class="l71">Marker 1</span><div class="field">dedo_Marker1</div></div>
        ${this.gap(1)}
        <div class="line"><span class="l71">Marker 2</span><div class="field ph">(select 2nd marker)</div></div>
        ${this.gap(20)}
      </div>`;
  }
}

/* ---------- page ---------- */
@customElement("app-root")
class AppRoot extends LitElement {
  static styles = [base, css`
    .app { width: 1915px; height: 1021px; background: #424242; overflow: hidden; display: flex; flex-direction: column; }
    .title { height: 26px; flex: none; background: #eff4f9; display: flex; align-items: center; padding: 0 15px 0 3px; color: #111; font: 13.500px "Open Sans", sans-serif; letter-spacing: -.15px; }
    .title span { margin-left: 6px; margin-right: auto; }
    .title .w { margin-left: 36px; }
    .menu { height: 27px; flex: none; display: flex; align-items: center; padding: 0 4px 0 9px; color: #ededed; font: 12px "Noto Sans", sans-serif; letter-spacing: -.35px; }
    .menu span { margin-right: 17px; }
    .combo { margin-left: auto; width: 120px; height: 21px; border: 1px solid #6a6a6a; background: #464646; display: flex; justify-content: flex-end; margin-right: 7px; margin-top: -3px; }
    .combo i { width: 17px; background: #6a6a6a; display: grid; place-items: center; }
    .combo i::after { content: ""; border: 4px solid transparent; border-top: 4px solid #e0e0e0; border-bottom: 0; }
    .menu .ic { margin-right: 14px; color: #dcdcdc; margin-top: -1px; }
    .menu .ic:last-child { margin-right: 0; }
    .bar { height: 29px; flex: none; display: flex; align-items: center; color: #dcdcdc; padding: 0 0 5px 9px; }
    .cell { width: 22px; display: flex; justify-content: center; }
    .sep { width: 1px; height: 18px; background: #6d6d6d; margin: 0 3px 0 2px; }
    .main { flex: none; height: 864px; display: grid; grid-template-columns: 351px 1147px 405px; gap: 4px; padding-left: 4px; }
    .col { display: flex; flex-direction: column; gap: 4px; }
    .time { display: block; margin: 4px 0 0 5px; flex: none; }
    .ctl { height: 45px; flex: none; margin: 0 1px 0 5px; background: #2d2d2d; display: flex; align-items: center; color: #fff; font: 14px Lato, sans-serif; white-space: nowrap; }
    .mode { margin-left: 16px; width: 100px; height: 22px; border: 1px solid #00e8fa; border-radius: 3px; display: flex; color: #00e8fa; font-size: 12px; line-height: 20px; text-align: center; }
    .mode div { width: 50px; }
    .mode .e { background: #00e8fa; color: #2d4a4e; }
    .dim { color: #8c8c8c; }
    .tn { margin-left: 151px; width: 90px; letter-spacing: -.1px; }
    .tk { width: 241px; letter-spacing: -.29px; }
    .transport { display: block; width: 170px; flex: none; }
    .tc { font-size: 34px; margin-left: 45px; width: 198px; letter-spacing: -.8px; }
    .fr { font-size: 34px; width: 103px; letter-spacing: -.8px; }
    .sm { font-size: 11.500px; }
    .loop { width: 54px; }
    .rev { width: 68px; letter-spacing: -.1px; }
    .rate { width: 64px; height: 20px; background: #1c1c1c; display: flex; align-items: center; justify-content: space-between; padding-left: 6px; letter-spacing: -.2px; }
    .rate i { width: 16px; height: 20px; background: #333; border: 1px solid #444; display: grid; place-items: center; }
    .num { height: 20px; background: #232323; display: grid; place-items: center; letter-spacing: -.2px; }
    .n1 { margin-left: 12px; width: 56px; } .n2 { width: 56px; }
    .bin { margin: 0 10px 0 9px; color: #9a9a9a; }
    .data { margin-left: auto; }
    .spark { margin: 0 5px 0 7px; }
    .kb { letter-spacing: -.5px; }
    .udn { color: #7c7c7c; margin: 0 9px 0 8px; }
    .bell { margin-right: 12px; }
  `];
  render() {
    const tools = ["open", "save", "saveAll", "|", "gear", "|", "square", "|", "camera", "wand", "db", "drawer", "listGear", "info", "triad", "five", "tools", "tag", "plot1", "plot2", "signal", "warn", "t1", "t2", "t3", "s1", "s2"];
    const ticks: [number, string][] = [[414.5, "2500"], [822.5, "5000"], [1229.5, "7500"], [1636.5, "10000"]];
    return html`<div class="app">
      <div class="title">
        <svg width="16" height="18" viewBox="0 0 16 18"><g fill="none" stroke-width="2.200"><circle cx="4.500" cy="5" r="3.500" stroke="#b9825a"/><circle cx="12.500" cy="7.500" r="3" stroke="#8a8a8a"/><circle cx="6.500" cy="14" r="3" stroke="#a8a8a8"/></g><circle cx="8.500" cy="9" r="2.600" fill="#333"/></svg>
        <span>Motive:Body 2.3.0 Final</span>
        ${ic("min")}<div class="w">${ic("restore")}</div><div class="w">${ic("winClose")}</div>
      </div>
      <div class="menu">${["File", "Edit", "View", "Layout", "Tools", "Community", "Help"].map((m) => html`<span>${m}</span>`)}
        <div class="combo"><i></i></div>${["winRuler", "winPerson", "winCam", "winPen"].map((n) => ic(n))}
      </div>
      <div class="bar">${tools.map((n) => n === "|" ? html`<div class="sep"></div>` : html`<div class="cell">${ic(n, 15)}</div>`)}</div>
      <div class="main">
        <div class="col"><assets-panel></assets-panel><data-panel></data-panel></div>
        <div class="col"><perspective-view></perspective-view><graph-view></graph-view></div>
        <edit-tools></edit-tools>
      </div>
      <svg class="time" width="1909" height="25" viewBox="5 950 1909 25">
        <path d="M5 950h1909v25H5z" fill="#222"/><path d="M5 974.500h1909" stroke="#050505"/>
        <path d="M7 964.500h1906" stroke="#0aa80a" stroke-width="1.200"/><path d="M1912.500 961v8" stroke="#0aa80a"/>
        <path d="M7 950v24" stroke="#fff" stroke-width="1.500"/><path d="M7 961v8" stroke="#0aa80a" stroke-width="1.500"/>
        ${ticks.map(([x, t]) => svg`<path d="M${x} 951v22" stroke="#555" stroke-dasharray="1 2.500"/><text x=${x - 5} y="960" text-anchor="end" font-family="Open Sans, sans-serif" font-size="11" fill="#d6d6d6" letter-spacing="-.3">${t}</text>`)}
      </svg>
      <div class="ctl">
        <div class="mode"><div>LIVE</div><div class="e">EDIT</div></div>
        <div class="tn dim">Take Name:</div><div class="tk">Take 2024-05-22 03.20.50 PM_007</div>
        <svg class="transport" width="170" height="26" viewBox="603 985 170 26" fill="#fff">
          <path d="M605 991h2.500v14H605zM618.500 991v14l-10.500-7zM630 991v14l-11.500-7zM646.500 991h2.500v14h-2.500zM660 991v14l-10.500-7zM679 985.500 700 998l-21 12.500zM715 991v14l10.500-7zM726.500 991h2.500v14h-2.500zM745 991v14l11.500-7zM756.500 991v14l10.500-7zM768 991h2.500v14H768z"/>
        </svg>
        <div class="tc">0:00:00:000</div><div class="fr">0000</div>
        <div class="loop sm">LOOP</div><div class="rev sm dim">REVERSE</div>
        <div class="rate">100%<i>${ic("chev", 12)}</i></div>
        <div class="num n1">0</div><div class="bin">${ic("binoc")}</div><div class="num n2">11697</div>
        <div class="data dim">Data</div>
        <svg class="spark" width="55" height="10" viewBox="0 0 55 10"><path d="M0 7.500h50" stroke="#14d8ea" stroke-width="1.200"/><circle cx="52" cy="7" r="1.800" fill="none" stroke="#fff"/></svg>
        <div class="kb">0.0 KB/s</div><div class="udn">${ic("updown", 11)}</div><div class="bell">${ic("bell", 16)}</div>
      </div>
    </div>`;
  }
}
